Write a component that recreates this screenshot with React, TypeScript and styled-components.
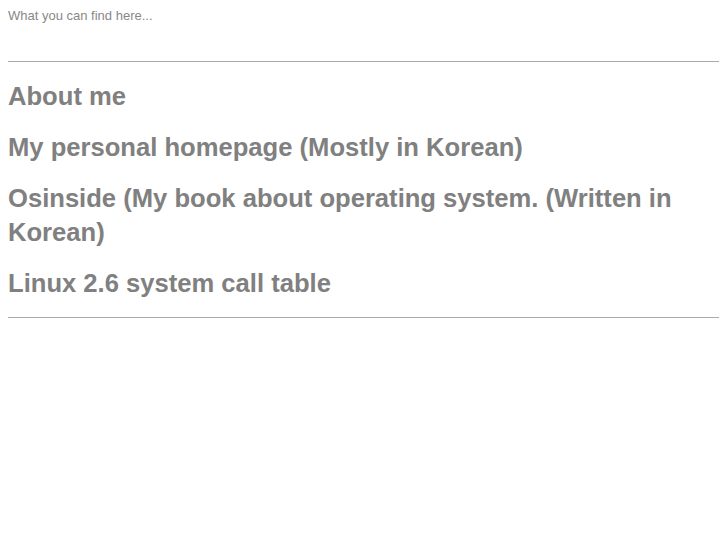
import * as React from 'react';
import styled, { createGlobalStyle } from 'styled-components';

const GlobalStyle = createGlobalStyle`
  body {
    margin: 8px;
    background: #fff;
    font-family: 'Liberation Sans', Arial, sans-serif;
    color: #808080;
  }
`;

const Intro = styled.p`
  margin: 0;
  font-size: 13px;
  line-height: 16px;
  color: #888;
`;

const Rule = styled.hr<{ $top: number }>`
  border: 0;
  border-top: 1px solid #aaa;
  height: 0;
  margin: ${(p) => p.$top}px 0 0;
`;

const LinkList = styled.ul`
  list-style: none;
  margin: 0;
  padding: 17px 0 0;
  display: flex;
  flex-direction: column;
  gap: 17px;
`;

const LinkItem = styled.li`
  font-size: 25.6px;
  font-weight: bold;
  line-height: 34px;
  color: #808080;
`;

const links = [
  'About me',
  'My personal homepage (Mostly in Korean)',
  'Osinside (My book about operating system. (Written in Korean)',
  'Linux 2.6 system call table'
];

export default function App() {
  return (
    <React.Fragment>
      <GlobalStyle />
      <Intro>What you can find here...</Intro>
      <Rule $top={37} />
      <LinkList>
        {links.map((title, i) => (
          <LinkItem key={i}>{title}</LinkItem>
        ))}
      </LinkList>
      <Rule $top={17} />
    </React.Fragment>
  );
}
